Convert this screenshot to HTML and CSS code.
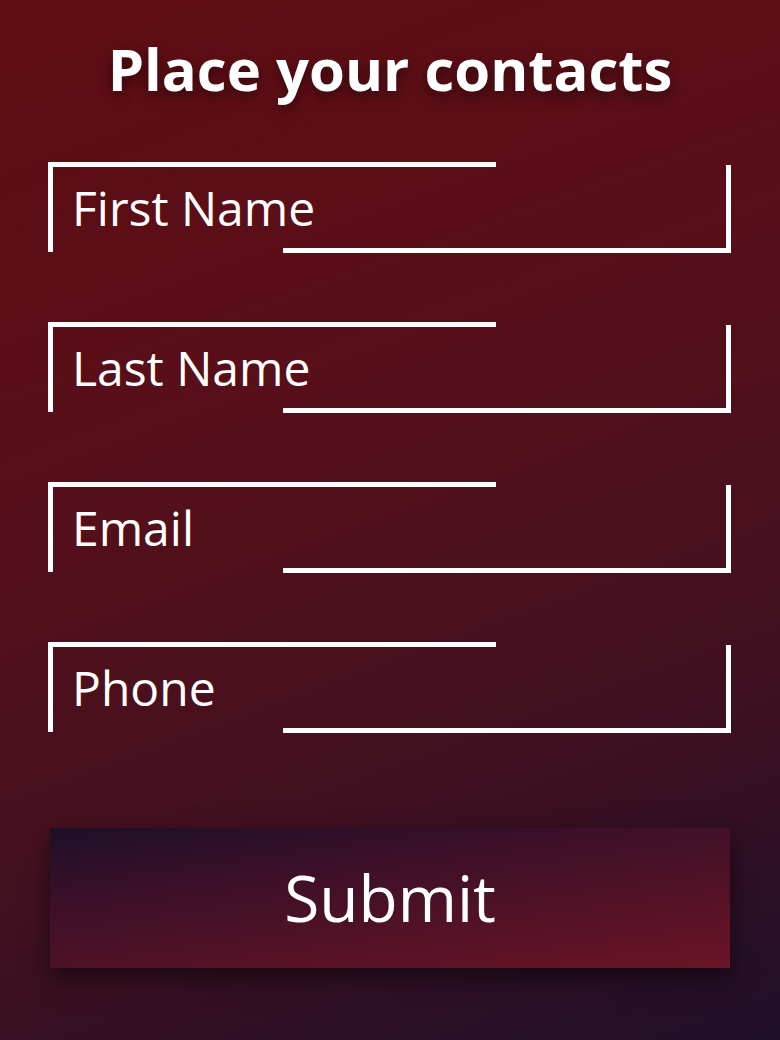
FILE: index.html
```html
<!DOCTYPE html>
<html lang="en">
<head>
<meta charset="utf-8">
<title>Place your contacts</title>
<link rel="stylesheet" href="styles.css">
</head>
<body>
<main class="page">
  <h1 class="title">Place your contacts</h1>
  <form class="form">
    <label class="field"><input class="input" type="text" placeholder="First Name"></label>
    <label class="field"><input class="input" type="text" placeholder="Last Name"></label>
    <label class="field"><input class="input" type="email" placeholder="Email"></label>
    <label class="field"><input class="input" type="tel" placeholder="Phone"></label>
    <button class="submit" type="button">Submit</button>
  </form>
</main>
</body>
</html>
```

FILE: styles.css
```css
* { box-sizing: border-box; }

html, body {
  margin: 0;
  height: 100%;
}

body {
  background: linear-gradient(160deg, #600d12 0%, #580f19 35%, #46101f 65%, #1f0f28 100%);
  font-family: "Open Sans", "Liberation Sans", sans-serif;
  color: #ffffff;
  overflow: hidden;
}

.page {
  width: 780px;
  height: 1040px;
  padding: 33px 48px 0 48px;
}

.title {
  margin: 0;
  font-size: 58px;
  line-height: 72px;
  font-weight: 700;
  text-align: center;
  text-shadow: 0 5px 12px rgba(0, 0, 0, 0.45);
}

.form {
  display: flex;
  flex-direction: column;
  align-items: flex-start;
  margin-top: 57px;
}

.field {
  position: relative;
  display: block;
  flex: none;
  width: 683px;
  height: 91px;
  padding: 17px 0 0 24px;
  margin-bottom: 69px;
}

.field::before,
.field::after {
  content: "";
  position: absolute;
  width: 443px;
  pointer-events: none;
}

.field::before {
  left: 0;
  top: 0;
  height: 85px;
  border-top: 5px solid #ffffff;
  border-left: 5px solid #ffffff;
}

.field::after {
  right: 0;
  bottom: 0;
  height: 83px;
  border-right: 5px solid #ffffff;
  border-bottom: 5px solid #ffffff;
}

.input {
  display: block;
  width: 620px;
  height: 58px;
  padding: 0;
  border: 0;
  outline: none;
  background: transparent;
  color: #ffffff;
  font-family: inherit;
  font-size: 48px;
  line-height: 58px;
  font-weight: 400;
}

.input::placeholder {
  color: #ffffff;
  opacity: 1;
}

.submit {
  flex: none;
  margin: 26px 0 0 2px;
  width: 680px;
  height: 140px;
  border: 0;
  padding: 0;
  background: linear-gradient(172deg, #1e0f28 0%, #3d1028 35%, #561226 70%, #6a1427 100%);
  box-shadow: 0 10px 22px rgba(0, 0, 0, 0.5);
  color: #ffffff;
  font-family: inherit;
  font-size: 64px;
  line-height: 140px;
  font-weight: 500;
  text-align: center;
  cursor: pointer;
}
```
